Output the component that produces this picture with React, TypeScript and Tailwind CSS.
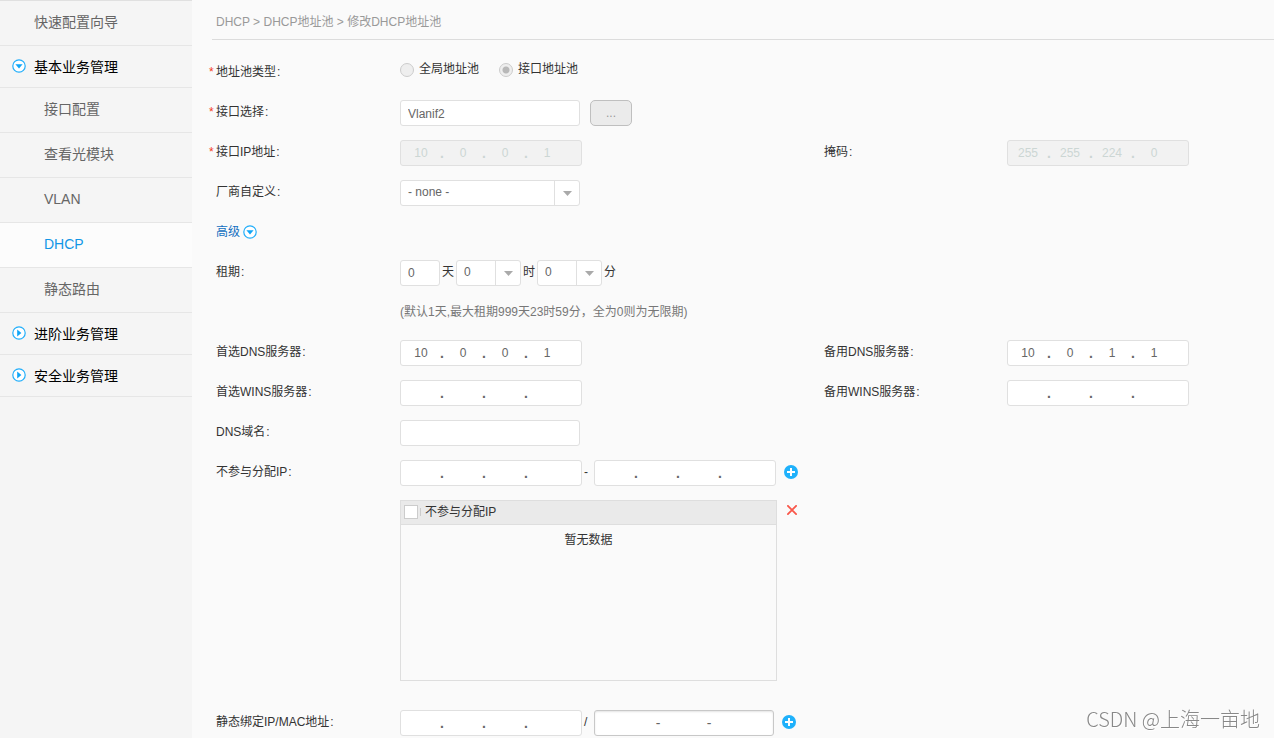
import React from "react";

const FIELD =
  "h-[26px] rounded-[3px] border border-[#e0e0e0] bg-white text-xs text-[#666] outline-none";

function DownCircle() {
  return (
    <svg viewBox="0 0 14 14" className="size-3.5 shrink-0" aria-hidden="true">
      <circle cx="7" cy="7" r="6.2" fill="#fff" stroke="#22aefa" strokeWidth="1.2" />
      <path d="M3.4 5.2h7.2L7 9.4z" fill="#0fa5f7" />
    </svg>
  );
}

function RightCircle() {
  return (
    <svg viewBox="0 0 14 14" className="size-3.5 shrink-0" aria-hidden="true">
      <circle cx="7" cy="7" r="6.2" fill="#fff" stroke="#22aefa" strokeWidth="1.2" />
      <path d="M5.2 3.4v7.2L9.4 7z" fill="#0fa5f7" />
    </svg>
  );
}

function AddButton({ label }: { label: string }) {
  return (
    <button type="button" aria-label={label} className="mt-[5px] ml-2 size-3.5 shrink-0">
      <svg viewBox="0 0 14 14" className="size-3.5">
        <circle cx="7" cy="7" r="7" fill="#1fb1fb" />
        <path d="M7 3v8M3 7h8" stroke="#fff" strokeWidth="2" />
      </svg>
    </button>
  );
}

function Section({ text, open = false }: { text: string; open?: boolean }) {
  return (
    <li className="h-[42px] border-b border-[#e6e6e6]">
      <a href="#" className="flex h-full items-center gap-2 pl-3 text-black">
        <span className="pb-0.5">{open ? <DownCircle /> : <RightCircle />}</span>
        {text}
      </a>
    </li>
  );
}

function NavItem({ text, top = false, active = false }: { text: string; top?: boolean; active?: boolean }) {
  return (
    <li className={`h-[45px] border-b border-[#e6e6e6] ${active ? "bg-[#fcfcfc]" : ""}`}>
      <a
        href="#"
        className={`block leading-[42px] ${top ? "pl-[34px]" : "pl-11"} ${active ? "text-[#1296e6]" : "text-[#666]"}`}
      >
        {text}
      </a>
    </li>
  );
}

function Label({ text, htmlFor, required = false }: { text: string; htmlFor?: string; required?: boolean }) {
  return (
    <label htmlFor={htmlFor} className="flex leading-6">
      <span className="w-[7px] shrink-0 text-[#f33c1c]">{required ? "*" : ""}</span>
      {text}
      <span className="pl-px">:</span>
    </label>
  );
}

function Row({ children }: { children: React.ReactNode }) {
  return (
    <div className="grid min-h-10 grid-cols-[191px_417px_190px_minmax(182px,1fr)] items-start">{children}</div>
  );
}

function IpField({
  id,
  name,
  parts = ["", "", "", ""],
  disabled = false,
}: {
  id: string;
  name: string;
  parts?: string[];
  disabled?: boolean;
}) {
  return (
    <div
      role="group"
      aria-label={name}
      className={`flex h-[26px] w-[182px] shrink-0 rounded-[3px] border border-[#e0e0e0] pl-1 leading-6 ${
        disabled ? "bg-[#f2f2f2] text-[#ccd6d4]" : "bg-white text-[#666]"
      }`}
    >
      {parts.map((p, i) => (
        <React.Fragment key={i}>
          {i > 0 && <span className="w-2.5 text-center text-sm leading-6 font-bold">.</span>}
          <input
            id={i === 0 ? id : undefined}
            aria-label={i === 0 ? undefined : `${name} ${i + 1}`}
            defaultValue={p}
            disabled={disabled}
            className="h-6 w-8 bg-transparent text-center outline-none"
          />
        </React.Fragment>
      ))}
    </div>
  );
}

function Select({
  id,
  label,
  value,
  width,
}: {
  id: string;
  label?: string;
  value: string;
  width: string;
}) {
  return (
    <div className={`relative ${width}`}>
      <select
        id={id}
        aria-label={label}
        className={`${FIELD} block w-full appearance-none pr-7 pb-0.5 pl-[7px]`}
      >
        <option>{value}</option>
      </select>
      <span className="pointer-events-none absolute inset-y-px right-px flex w-[25px] items-center justify-center border-l border-[#e0e0e0]">
        <svg viewBox="0 0 9 5" className="h-[5px] w-[9px]" aria-hidden="true">
          <path d="M0 0h9L4.5 5z" fill="#aaa" />
        </svg>
      </span>
    </div>
  );
}

function Radio({ text, checked = false }: { text: string; checked?: boolean }) {
  return (
    <label className="flex gap-[5px] leading-[19px]">
      <input
        type="radio"
        name="pool-type"
        disabled
        defaultChecked={checked}
        className="mt-[3px] size-3.5 appearance-none rounded-full border border-[#ccc] bg-[#eee] checked:bg-[radial-gradient(circle,#b8b8b8_3px,#eee_4px)]"
      />
      {text}
    </label>
  );
}

export default function App() {
  return (
    <div
      lang="zh-CN"
      className="flex min-h-screen bg-[#fafafa] font-['Liberation_Sans','Noto_Sans_CJK_SC',sans-serif] text-xs text-[#333]"
    >
      <nav className="w-48 shrink-0 bg-[#f5f5f5] text-sm">
        <ul className="border-t border-[#e0e0e0]">
          <NavItem text="快速配置向导" top />
          <Section text="基本业务管理" open />
          <NavItem text="接口配置" />
          <NavItem text="查看光模块" />
          <NavItem text="VLAN" />
          <NavItem text="DHCP" active />
          <NavItem text="静态路由" />
          <Section text="进阶业务管理" />
          <Section text="安全业务管理" />
        </ul>
      </nav>

      <main className="min-w-0 flex-1">
        <div className="ml-5 h-10 border-b border-[#dcdcdc] pl-1 leading-[44px] text-[#999]">
          DHCP &gt; DHCP地址池 &gt; 修改DHCP地址池
        </div>

        <form className="pt-5 pl-[17px]">
          <Row>
            <Label text="地址池类型" required />
            <div className="flex gap-5">
              <Radio text="全局地址池" />
              <Radio text="接口地址池" checked />
            </div>
          </Row>

          <Row>
            <Label text="接口选择" htmlFor="iface" required />
            <div className="flex gap-2.5">
              <input id="iface" defaultValue="Vlanif2" className={`${FIELD} w-[180px] px-[7px] pt-0.5`} />
              <button
                type="button"
                className="h-[26px] w-[42px] rounded-[5px] border border-[#bfbfbf] bg-[#ebebeb] text-[#999]"
              >
                ...
              </button>
            </div>
          </Row>

          <Row>
            <Label text="接口IP地址" htmlFor="iface-ip" required />
            <IpField id="iface-ip" name="接口IP地址" parts={["10", "0", "0", "1"]} disabled />
            <Label text="掩码" htmlFor="mask" />
            <IpField id="mask" name="掩码" parts={["255", "255", "224", "0"]} disabled />
          </Row>

          <Row>
            <Label text="厂商自定义" htmlFor="vendor" />
            <Select id="vendor" value="- none -" width="w-[180px]" />
          </Row>

          <Row>
            <button type="button" className="flex items-center gap-[3px] pl-[7px] leading-6 text-[#136fc0]">
              高级
              <DownCircle />
            </button>
          </Row>

          <Row>
            <Label text="租期" htmlFor="lease-day" />
            <div className="flex leading-6">
              <input id="lease-day" defaultValue="0" className={`${FIELD} w-10 px-[7px]`} />
              <span className="w-4 text-center">天</span>
              <Select id="lease-hour" label="时" value="0" width="w-[65px]" />
              <span className="w-4 text-center">时</span>
              <Select id="lease-minute" label="分" value="0" width="w-[65px]" />
              <span className="w-4 text-center">分</span>
            </div>
          </Row>

          <Row>
            <p className="col-start-2 leading-6 text-[#777]">(默认1天,最大租期999天23时59分，全为0则为无限期)</p>
          </Row>

          <Row>
            <Label text="首选DNS服务器" htmlFor="dns1" />
            <IpField id="dns1" name="首选DNS服务器" parts={["10", "0", "0", "1"]} />
            <Label text="备用DNS服务器" htmlFor="dns2" />
            <IpField id="dns2" name="备用DNS服务器" parts={["10", "0", "1", "1"]} />
          </Row>

          <Row>
            <Label text="首选WINS服务器" htmlFor="wins1" />
            <IpField id="wins1" name="首选WINS服务器" />
            <Label text="备用WINS服务器" htmlFor="wins2" />
            <IpField id="wins2" name="备用WINS服务器" />
          </Row>

          <Row>
            <Label text="DNS域名" htmlFor="domain" />
            <input id="domain" className={`${FIELD} w-[180px] px-[7px]`} />
          </Row>

          <Row>
            <Label text="不参与分配IP" htmlFor="exclude-start" />
            <div className="flex leading-6">
              <IpField id="exclude-start" name="不参与分配IP" />
              <span className="w-3 pl-0.5">-</span>
              <IpField id="exclude-end" name="不参与分配IP" />
              <AddButton label="添加不参与分配IP" />
            </div>
          </Row>

          <Row>
            <div className="col-start-2 flex items-start pb-[29px]">
              <div className="h-[181px] w-[377px] border border-[#dedede]">
                <table className="w-full border-collapse">
                  <thead>
                    <tr className="border-b border-[#dedede] bg-[#eaeaea]">
                      <th className="h-[23px] p-0 font-normal">
                        <label className="flex items-center pl-[3px] leading-[22px]">
                          <input
                            type="checkbox"
                            className="size-3.5 appearance-none border border-[#ccc] bg-white"
                          />
                          <span className="mr-1 ml-0.5 h-2 w-px bg-[#ccc]" />
                          不参与分配IP
                        </label>
                      </th>
                    </tr>
                  </thead>
                  <tbody>
                    <tr>
                      <td className="p-0 text-center leading-[30px]">暂无数据</td>
                    </tr>
                  </tbody>
                </table>
              </div>
              <button type="button" aria-label="删除不参与分配IP" className="mt-[5px] ml-2.5 size-2.5">
                <svg viewBox="0 0 10 10" className="size-2.5">
                  <path d="M.3.3l9.4 9.4M9.7.3L.3 9.7" stroke="#f9574a" strokeWidth="1.8" />
                </svg>
              </button>
            </div>
          </Row>

          <div className="-mb-5">
            <Row>
              <Label text="静态绑定IP/MAC地址" htmlFor="bind-ip" />
              <div className="flex leading-6">
                <IpField id="bind-ip" name="静态绑定IP" />
                <span className="w-3 pl-0.5">/</span>
                <div
                  role="group"
                  aria-label="MAC地址"
                  className="flex h-[26px] w-[180px] rounded-[3px] border border-[#c8c8c8] bg-white pl-[17px] text-[#666] shadow-[inset_0_1px_2px_#e4e4e4]"
                >
                  <input aria-label="MAC地址 1" className="w-[41px] bg-transparent text-center outline-none" />
                  <span className="w-2.5 text-center text-sm leading-6">-</span>
                  <input aria-label="MAC地址 2" className="w-[41px] bg-transparent text-center outline-none" />
                  <span className="w-2.5 text-center text-sm leading-6">-</span>
                  <input aria-label="MAC地址 3" className="w-[41px] bg-transparent text-center outline-none" />
                </div>
                <AddButton label="添加静态绑定" />
              </div>
            </Row>
          </div>
        </form>
      </main>

      <div className="pointer-events-none fixed right-[14px] bottom-1 font-['Noto_Sans_CJK_SC',sans-serif] text-xl leading-[30px] font-light text-[#888] [text-shadow:1px_1px_0_#fff]">
        CSDN @上海一亩地
      </div>
    </div>
  );
}
